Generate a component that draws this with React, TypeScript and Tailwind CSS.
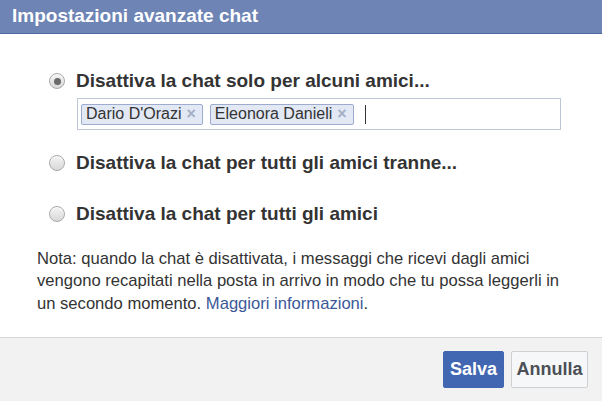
import { useState } from "react";

const OPTIONS = [
  "Disattiva la chat solo per alcuni amici...",
  "Disattiva la chat per tutti gli amici tranne...",
  "Disattiva la chat per tutti gli amici",
];

function Radio({ checked }: { checked: boolean }) {
  return (
    <span className="flex h-[16px] w-[16px] shrink-0 items-center justify-center rounded-full border border-[#a9a9a9] bg-gradient-to-b from-[#f4f4f4] to-[#d8d8d8] shadow-[inset_0_1px_1px_rgba(255,255,255,0.8)]">
      {checked && <span className="h-[7px] w-[7px] rounded-full bg-[#6a6a6a]" />}
    </span>
  );
}

function Tag({ name }: { name: string }) {
  return (
    <span className="flex h-[21px] items-center gap-[5px] rounded-[2px] border border-[#9dacce] bg-[#e2e8f4] pl-[4px] pr-[6px] text-[16px] text-[#333]">
      {name}
      <span className="text-[16px] font-bold leading-none text-[#a4aec4]">×</span>
    </span>
  );
}

export default function App() {
  const [sel, setSel] = useState(0);
  return (
    <div className="flex h-[401px] w-[602px] flex-col bg-white font-['Liberation_Sans',Arial,sans-serif] text-[#1d2129]">
      <div className="flex h-[34px] items-center border-b border-[#4e68a1] bg-[#6d84b4] px-[12px] text-[19px] font-bold text-white">
        Impostazioni avanzate chat
      </div>

      <div className="flex-1 pl-[49px] pr-[20px] pt-[36px]">
        {OPTIONS.map((o, i) => (
          <div key={o} className={i === 0 ? "" : i === 1 ? "mt-[22px]" : "mt-[29px]"}>
            <button type="button" onClick={() => setSel(i)} className="flex h-[22px] items-center gap-[11px] text-[19px] font-bold text-[#333]">
              <Radio checked={sel === i} />
              {o}
            </button>
            {i === 0 && (
              <div className="ml-[28px] mt-[6px] flex h-[32px] w-[484px] items-center gap-[7px] border border-[#bdc7d8] px-[3px]">
                <Tag name="Dario D'Orazi" />
                <Tag name="Eleonora Danieli" />
                <span className="ml-[4px] h-[19px] w-px bg-[#333]" />
              </div>
            )}
          </div>
        ))}
      </div>

      <p className="px-[37px] pb-[22px] text-[16.6px] leading-[22.5px] text-[#333]">
        Nota: quando la chat è disattivata, i messaggi che ricevi dagli amici vengono recapitati nella posta in arrivo in modo che tu possa leggerli in un secondo momento.{" "}
        <a href="#" className="text-[#3b5998]">Maggiori informazioni</a>.
      </p>

      <div className="flex h-[64px] items-center justify-end gap-[7px] border-t border-[#d6d6d6] bg-[#f2f2f2] pr-[14px]">
        <button type="button" className="h-[37px] w-[61px] rounded-[2px] border border-[#4267b2] bg-[#4267b2] text-[18px] font-bold text-white">
          Salva
        </button>
        <button type="button" className="h-[37px] w-[77px] rounded-[2px] border border-[#ced0d4] bg-[#f6f7f9] text-[18px] font-bold text-[#4b4f56]">
          Annulla
        </button>
      </div>
    </div>
  );
}
